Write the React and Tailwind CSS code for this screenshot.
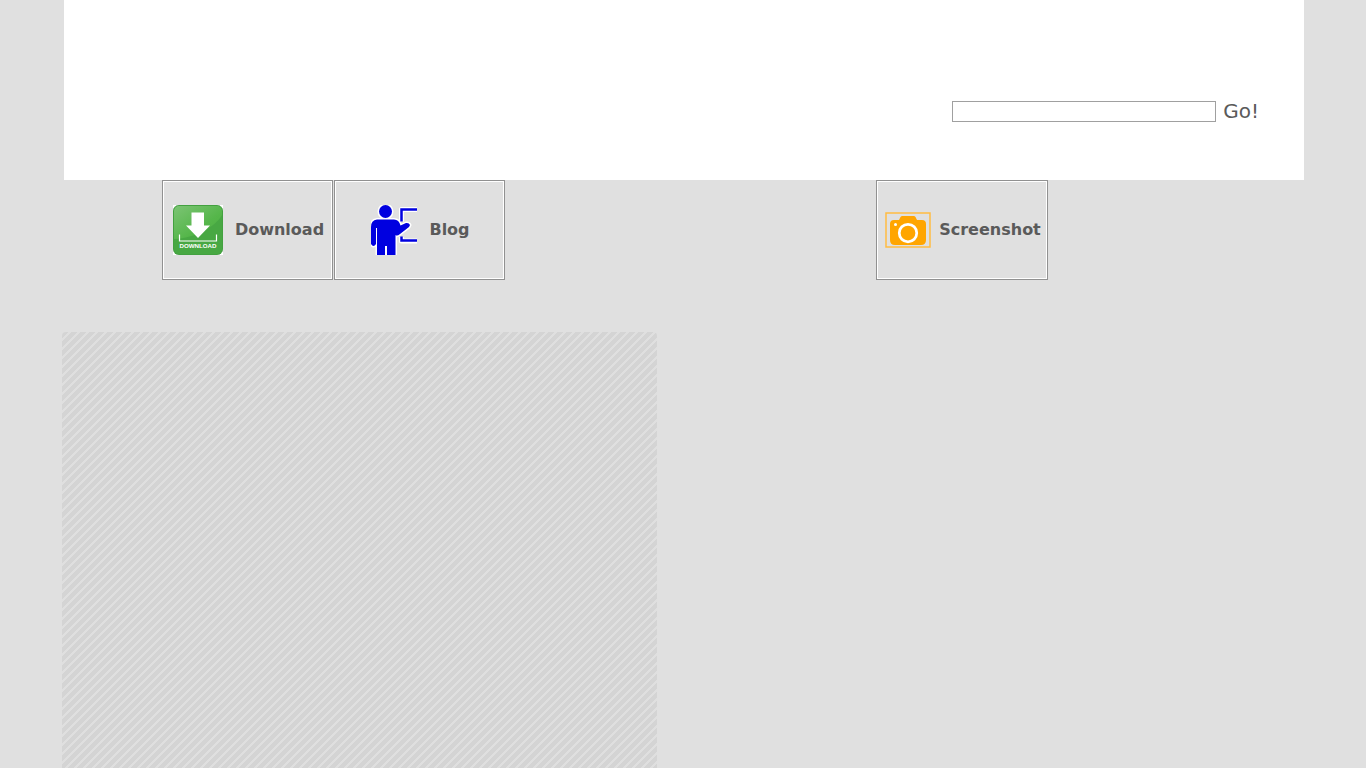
function DownloadIcon() {
  return (
    <svg viewBox="0 0 50 50" className="size-[50px] shrink-0" aria-hidden="true">
      <defs>
        <linearGradient id="shine" x1="0" y1="0" x2="1" y2="1">
          <stop offset="0" stopColor="#7cc474" />
          <stop offset="0.6" stopColor="#55b64a" />
          <stop offset="1" stopColor="#4db040" />
        </linearGradient>
      </defs>
      <path d="M0 0h3v3H0zM47 0h3v3h-3zM0 47h3v3H0zM47 47h3v3h-3z" fill="#fff" />
      <rect width="50" height="50" rx="6" fill="#43a140" />
      <rect x="1" y="1" width="48" height="48" rx="5" fill="#48a843" />
      <path d="M1 6a5 5 0 0 1 5-5h38a5 5 0 0 1 5 5v4C42 22 22 33 1 34z" fill="url(#shine)" />
      <path d="M18.500 7.500h12.500v13h6L25 33 13 20.500h5.500z" fill="#fff" />
      <path d="M6.500 29.500v6.500h37v-6.500" fill="none" stroke="#fff" strokeWidth="1.200" />
      <text x="25" y="43" textAnchor="middle" fontSize="6.200" fontWeight="700" fill="#fff" fontFamily="Liberation Sans, sans-serif">
        DOWNLOAD
      </text>
    </svg>
  );
}

function BlogIcon() {
  const person =
    "M6 14.500h17q5 0 6.500 6l5.500-2.500q3-.5 4 2l-1 2-9 7q-3 2.500-4.500 1V50H16v-9h-2v9H6V23H5v16q-2.500 4-5 0V22q0-7 6-7.500z";
  return (
    <svg viewBox="0 0 46 50" className="h-[50px] w-[46px] shrink-0" aria-hidden="true">
      <g fill="#fff" stroke="#fff" strokeWidth="3" strokeLinejoin="round">
        <circle cx="14.500" cy="6.500" r="6.500" />
        <path d={person} />
        <path d="M46 4.500H30.500v12M30.500 32v4h15.500" fill="none" strokeWidth="5" />
      </g>
      <g fill="#0000e0">
        <circle cx="14.500" cy="6.500" r="6.500" />
        <path d={person} />
        <path d="M46 4.500H30.500v12M30.500 31.500v4h15.500" fill="none" stroke="#0000e0" strokeWidth="2.500" />
      </g>
    </svg>
  );
}

function CameraIcon() {
  return (
    <svg viewBox="0 0 46 36" className="h-9 w-[46px] shrink-0" aria-hidden="true">
      <rect x="1" y="1" width="44" height="34" fill="none" stroke="#ffbc42" strokeWidth="1.500" />
      <path d="M9 8h5l1.500-3q.5-1 2-1h11q1.500 0 2 1L32 8h5q4 0 4 4v16q0 5-5 5H10q-5 0-5-5V12q0-4 4-4z" fill="#ffa500" />
      <circle cx="23" cy="21" r="8.750" fill="none" stroke="#fff" strokeWidth="2.750" />
      <circle cx="10.500" cy="12.500" r="1.500" fill="#fff" />
    </svg>
  );
}

function NavButton({ icon, label, className = "" }) {
  return (
    <a
      href="#"
      className={`flex h-[100px] items-center justify-center border border-[#919191] font-bold shadow-[inset_0_0_0_1px_#fff] ${className}`}
    >
      {icon}
      {label}
    </a>
  );
}

export default function App() {
  return (
    <div className="flex min-h-screen flex-col bg-[#e0e0e0] px-[62px] font-['DejaVu_Sans',sans-serif] text-base text-[#5a5a5a]">
      {/* Header with search */}
      <header className="ml-[2px] flex h-[180px] items-start justify-end bg-white pt-[99px] pr-[45px]">
        <form className="flex items-center gap-[7px]" onSubmit={(e) => e.preventDefault()}>
          <input
            type="text"
            aria-label="Search"
            className="h-[21px] w-[264px] border border-[#a0a0a0] bg-white px-1 text-sm outline-none"
          />
          <button type="submit" className="text-xl leading-6">
            Go!
          </button>
        </form>
      </header>

      {/* Navigation */}
      <nav className="flex px-[100px]">
        <NavButton icon={<DownloadIcon />} label="Download" className="w-[171px] gap-3 pl-[2px]" />
        <NavButton icon={<BlogIcon />} label="Blog" className="ml-px w-[171px] gap-3 pl-[2px]" />
        <NavButton icon={<CameraIcon />} label="Screenshot" className="mr-[156px] ml-auto w-[172px] gap-2 pl-[2px]" />
      </nav>

      {/* Content panel */}
      <main className="mt-[52px] w-[calc(48%-1px)] flex-1 rounded-t bg-[linear-gradient(135deg,#d4d4d4_0_36%,#dfdfdf_36%_50%,#d4d4d4_50%_86%,#dfdfdf_86%)] bg-size-[9px_9px]" />
    </div>
  );
}
